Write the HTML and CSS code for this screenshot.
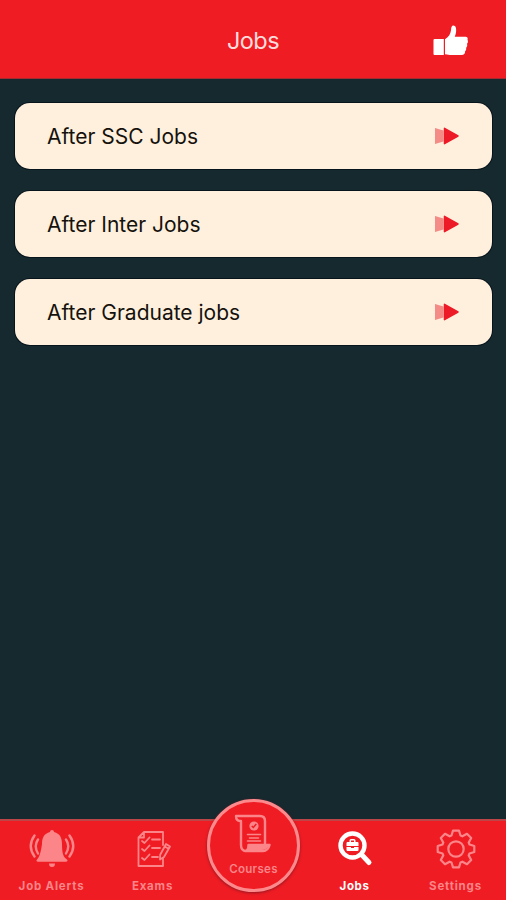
FILE: index.html
```html
<!DOCTYPE html>
<html lang="en">
<head>
<meta charset="utf-8">
<title>Jobs</title>
<link rel="stylesheet" href="styles.css">
</head>
<body>
<div class="app">
  <header class="header">
    <h1 class="title">Jobs</h1>
    <svg class="like" viewBox="0 0 36 32"><path d="M1.500 14h9.300v16H1.500a1 1 0 0 1-1-1V15a1 1 0 0 1 1-1zM12 14.200c4-2.500 5.500-5.500 6-9C18.200 2 18.800.500 20.300.500c2.500 0 3.200 3 2.800 6-.2 2.300-.8 3.700-1.300 5.300h10c3 0 3.200 1.500 2.700 3 .8 1.500.5 3-.5 4 .5 1.600.2 3-.9 4 .3 1.600 0 2.700-1 3.500 0 2.500-1 3.700-3.600 3.700H18c-2 0-3-.8-6-.8z"/></svg>
  </header>
  <main class="list">
    <a class="card"><span class="label">After SSC Jobs</span><svg class="arrow" viewBox="0 0 26 20"><path class="tail" d="M1 2 L9.500 4.500v11L1 18z"/><path class="head" d="M10.500 2.300 24 10 10.500 17.700z"/></svg></a>
    <a class="card"><span class="label">After Inter Jobs</span><svg class="arrow" viewBox="0 0 26 20"><path class="tail" d="M1 2 L9.500 4.500v11L1 18z"/><path class="head" d="M10.500 2.300 24 10 10.500 17.700z"/></svg></a>
    <a class="card"><span class="label">After Graduate jobs</span><svg class="arrow" viewBox="0 0 26 20"><path class="tail" d="M1 2 L9.500 4.500v11L1 18z"/><path class="head" d="M10.500 2.300 24 10 10.500 17.700z"/></svg></a>
  </main>
  <nav class="tabs">
    <a class="tab">
      <svg class="icon" viewBox="-24 -20 48 40"><path class="fill" d="M-2-17a2 2 0 0 1 4 0C8-15.500 10-11 10-5c0 10 1.500 13 5 15.500 1 1 .5 2.300-1 2.300h-28c-1.500 0-2-1.300-1-2.300C-11.500 8-10-5-10-5c0-6 2-10.500 8-12zM-3 14.500h6a3 3.500 0 0 1-6 0z"/><path class="line" d="M-14-9.500q-4.500 6.500 0 14M-17.500-13.500q-7.500 10.500 0 21M14-9.500q4.500 6.500 0 14M17.500-13.500q7.500 10.500 0 21"/></svg>
      <span>Job Alerts</span>
    </a>
    <a class="tab">
      <svg class="icon" viewBox="-24 -20 48 40"><path class="line thin" d="M10-4v-13H-9l-5.500 5.500V17H10V9M-9-17v5.500h-5.500M-1-9.500H7M-1-1H7M-1 8H5M-11-8l2.500 2 5-5.500M-11 0l2.500 2 5-5.500M-11 9l2.500 2 5-5.500M13-5l4 2.500L11 8l-4 2.500.2-4.700zM11.800-2.500l3.700 2.200"/></svg>
      <span>Exams</span>
    </a>
    <div class="tab center">
      <a class="bubble">
        <svg class="scroll" viewBox="0 0 40 40"><path class="line" d="M2 3h24q5 0 5 5v23M2 3q0 5 4 5h1v24q0 6 5 6h17q5 0 6.500-6H14.500q0 6-3.500 6"/><path class="fill" d="M14 32h21q-2 5-7 5H13z"/><circle class="fill" cx="20" cy="13" r="4.600"/><path class="mark" d="m17.800 13 1.500 1.500 3-3.500"/><path class="line rule" d="M13.500 21.500h13M15.500 25h9M13.500 28h13"/></svg>
        <span>Courses</span>
      </a>
    </div>
    <a class="tab active">
      <svg class="icon" viewBox="-24 -20 48 40"><circle class="lens" cx="-2.500" cy="-3.500" r="12"/><path class="handle" d="M6.500 5.500 14 13.500"/><path class="fill" d="M-7.500-7h2v-1.500q0-1.500 1.500-1.500h3q1.500 0 1.500 1.500V-7h2q1 0 1 1v3h-12v-3q0-1 1-1zM-4-8.500V-7h3v-1.500zM-8.500-2h4.500v1h3v-1h4.500v3q0 1-1 1h-10q-1 0-1-1z"/></svg>
      <span>Jobs</span>
    </a>
    <a class="tab">
      <svg class="icon" viewBox="-24 -20 48 40"><path class="line gear" d="M-4.500-13.500-3-18.300H3L4.500-13.500 6.400-12.700 11-15.200 15.200-11 12.700-6.400 13.500-4.500 18.300-3V3L13.500 4.500 12.700 6.400 15.200 11 11 15.200 6.400 12.700 4.500 13.500 3 18.300H-3L-4.500 13.500-6.400 12.700-11 15.200-15.200 11-12.700 6.400-13.500 4.500-18.300 3V-3L-13.500-4.500-12.700-6.400-15.200-11-11-15.200-6.400-12.700z"/><circle class="line gear" r="7.700"/></svg>
      <span>Settings</span>
    </a>
  </nav>
</div>
</body>
</html>
```

FILE: styles.css
```css
* { box-sizing: border-box; }
body { margin: 0; font-family: Inter, sans-serif; }
.app {
  display: flex;
  flex-direction: column;
  width: 506px;
  height: 900px;
  background: #15292f;
  overflow: hidden;
}
.header {
  display: grid;
  grid-template-columns: 1fr auto 1fr;
  align-items: center;
  height: 79px;
  padding: 4px 37px 0;
  background: #ef1c24;
  border-bottom: 1px solid #a32a30;
}
.title {
  grid-column: 2;
  margin: 0;
  color: #ffdcdc;
  font-size: 23.5px;
  font-weight: 400;
  line-height: 30px;
  letter-spacing: -0.6px;
}
.like { width: 36px; height: 32px; justify-self: end; fill: #fff; }
.list {
  display: flex;
  flex: 1;
  flex-direction: column;
  gap: 22px;
  padding: 24px 14px 0 15px;
}
.card {
  display: flex;
  align-items: center;
  justify-content: space-between;
  height: 66px;
  padding: 0 32px;
  border-radius: 15px;
  background: #fff0dd;
  box-shadow: 0 0 0 1px #07141c;
}
.label { padding-top: 2px; color: #15120e; font-size: 21px; line-height: 28px; }
.arrow { width: 26px; height: 20px; fill: #ed1b27; }
.tail { fill: #f58b87; }
.head { stroke: #ed1b27; stroke-width: 1.5; stroke-linejoin: round; }
.tabs {
  display: grid;
  grid-template-columns: repeat(5, 1fr);
  height: 81px;
  padding-left: 1px;
  background: #ef1c24;
  border-top: 2px solid #bd4447;
  color: #fb8588;
}
.tab {
  display: flex;
  flex-direction: column;
  align-items: center;
  padding-top: 8px;
  font-size: 11.5px;
  font-weight: 700;
  line-height: 16px;
  letter-spacing: 0.8px;
}
.icon { width: 48px; height: 40px; margin-bottom: 9px; }
.fill { fill: currentColor; }
.line {
  fill: none;
  stroke: currentColor;
  stroke-width: 2.4;
  stroke-linecap: round;
  stroke-linejoin: round;
}
.thin { stroke-width: 1.8; }
.gear { stroke-width: 2.2; }
.rule { stroke-width: 1.6; }
.mark { fill: none; stroke: #ef1c24; stroke-width: 1.5; }
.active { color: #fff; letter-spacing: 0.6px; }
.lens { fill: none; stroke: currentColor; stroke-width: 4.4; }
.handle { fill: none; stroke: currentColor; stroke-width: 5; stroke-linecap: round; }
.center { padding: 0; }
.bubble {
  display: flex;
  flex-direction: column;
  align-items: center;
  flex: none;
  width: 93px;
  height: 93px;
  margin-top: -22px;
  padding-top: 11px;
  border: 3px solid #fc8a8d;
  border-radius: 50%;
  background: #ef1c24;
  box-shadow: 0 1px 3px #8e1820;
  font-weight: 600;
  letter-spacing: 0.3px;
}
.scroll { width: 40px; height: 40px; margin-bottom: 8px; }
```
